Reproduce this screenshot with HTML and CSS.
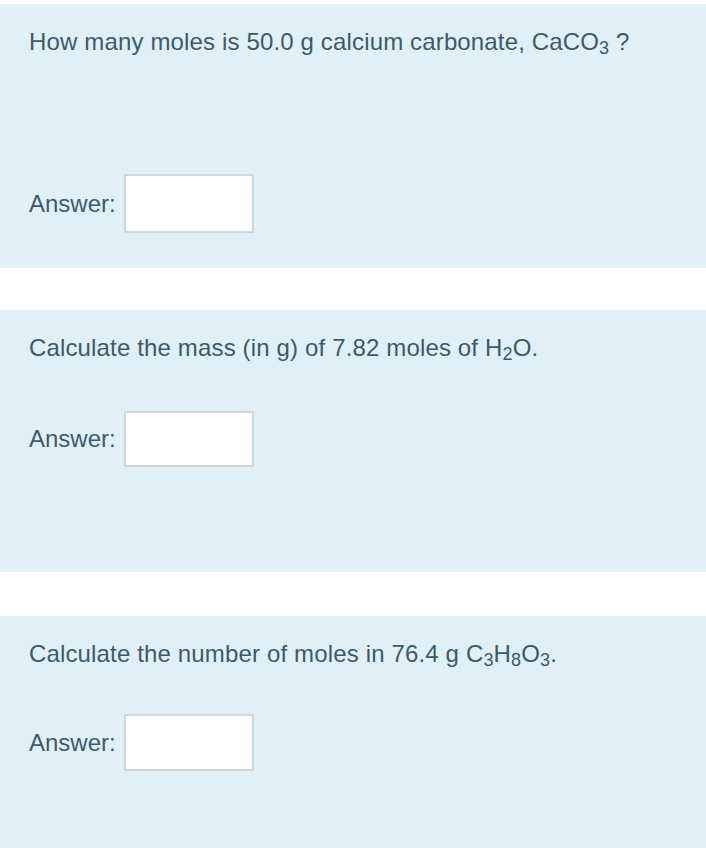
FILE: index.html
```html
<!DOCTYPE html>
<html>
<head>
<meta charset="utf-8">
<link rel="stylesheet" href="styles.css">
</head>
<body>
<div class="page">
  <section class="panel panel-1">
    <p class="question">How many moles is 50.0 g calcium carbonate, CaCO<sub>3</sub> ?</p>
    <div class="answer answer-1">
      <label class="label">Answer:</label>
      <input class="box box-1" type="text">
    </div>
  </section>
  <section class="panel panel-2">
    <p class="question">Calculate the mass (in g) of 7.82 moles of H<sub>2</sub>O.</p>
    <div class="answer answer-2">
      <label class="label">Answer:</label>
      <input class="box box-2" type="text">
    </div>
  </section>
  <section class="panel panel-3">
    <p class="question">Calculate the number of moles in 76.4 g C<sub>3</sub>H<sub>8</sub>O<sub>3</sub>.</p>
    <div class="answer answer-3">
      <label class="label">Answer:</label>
      <input class="box box-3" type="text">
    </div>
  </section>
</div>
</body>
</html>
```

FILE: styles.css
```css
html, body {
  margin: 0;
  padding: 0;
  background: #ffffff;
}
body {
  font-family: "Liberation Sans", Arial, sans-serif;
  color: #3b5b6b;
}
.page {
  padding-top: 4px;
  display: flex;
  flex-direction: column;
}
.panel {
  background: #e1f0f7;
  padding: 24px 0 0 29px;
}
.panel-1 { padding-bottom: 35px; }
.panel-2 { margin-top: 42px; padding-bottom: 105px; }
.panel-3 { margin-top: 44px; padding-bottom: 90px; }
.question {
  margin: 0;
  font-size: 24px;
  line-height: 28px;
  letter-spacing: 0.15px;
}
.question sub {
  font-size: 18px;
  line-height: 0;
  vertical-align: -4px;
}
.answer {
  display: flex;
  align-items: center;
  gap: 8px;
}
.answer-1 { margin-top: 118px; }
.answer-2 { margin-top: 49px; }
.answer-3 { margin-top: 46px; }
.label {
  font-size: 24px;
  line-height: 28px;
}
.box {
  box-sizing: border-box;
  width: 130px;
  margin: 0;
  padding: 0;
  background: #ffffff;
  border: 2px solid #cfd6dc;
  border-radius: 0;
  outline: none;
}
.box-1 { height: 59px; }
.box-2 { height: 56px; }
.box-3 { height: 57px; }
```
